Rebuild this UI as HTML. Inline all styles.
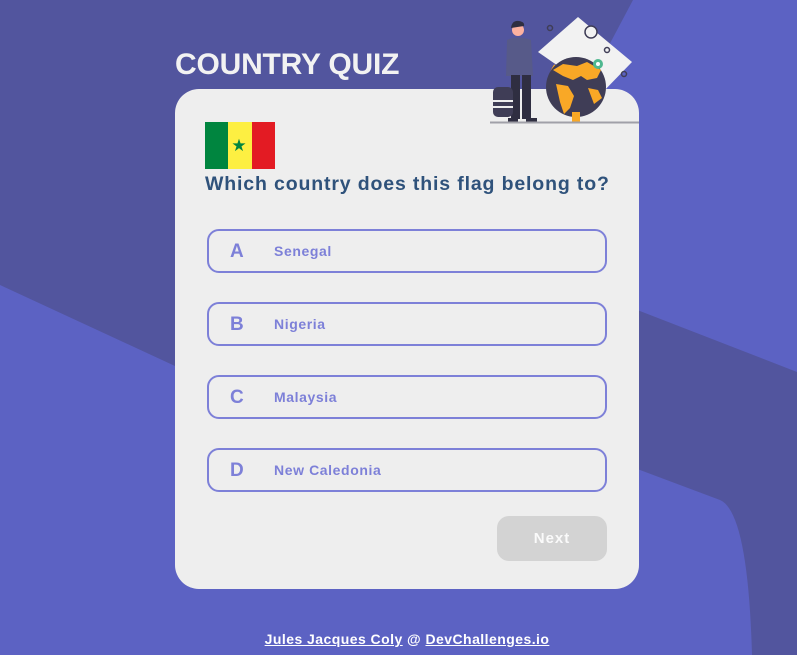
<!DOCTYPE html>
<html><head><meta charset="utf-8"><style>
*{margin:0;padding:0;box-sizing:border-box}
body{width:797px;height:655px;overflow:hidden;background:#5c62c3;font-family:"Liberation Sans",sans-serif;position:relative}
.bg{position:absolute;left:0;top:0}
h1{position:absolute;left:175px;top:48px;font-size:30px;font-weight:bold;color:#f2f2f2;letter-spacing:-0.2px}
.card{position:absolute;left:175px;top:89px;width:464px;height:500px;background:#eeeeee;border-radius:24px}
.flag{position:absolute;left:205px;top:122px;width:70px;height:47px;display:flex}
.flag div{flex:1;position:relative}
.q{position:absolute;left:205px;top:173px;font-size:19.5px;font-weight:bold;color:#2f527b;letter-spacing:0.85px;white-space:nowrap}
.opt{position:absolute;left:207px;width:400px;height:44px;border:2px solid #7d80d8;border-radius:12px;color:#7d80d8;font-weight:bold}
.opt .l{position:absolute;left:21px;top:10px;font-size:19px}
.opt .t{position:absolute;left:65px;top:12px;font-size:14px;letter-spacing:0.6px}
.next{position:absolute;left:497px;top:516px;width:110px;height:45px;background:#d3d3d3;border-radius:12px;color:#fafafa;font-weight:bold;font-size:15px;text-align:center;line-height:45px;letter-spacing:1px}
.foot{position:absolute;left:0;width:814px;top:631px;text-align:center;color:#fff;font-size:14px;font-weight:bold;letter-spacing:0.45px}
.foot u{text-decoration:underline}
</style></head><body>
<svg class="bg" width="797" height="655">
<polygon points="0,0 633,0 580,100 520,220 175,366 0,285" fill="#52559e"/>
<path d="M560,280 L797,372 L797,655 L752,655 Q748,512 720,500 L560,440 Z" fill="#52559e"/>
</svg>
<h1>COUNTRY QUIZ</h1>
<div class="card"></div>
<svg class="bg" width="797" height="655">
<polygon points="578,17 632,62 600,95 538,52" fill="#f2f2f2"/>
<circle cx="591" cy="32" r="6" fill="#f2f2f2" stroke="#3f3d56" stroke-width="1.5"/>
<circle cx="550" cy="28" r="2.5" fill="none" stroke="#3f3d56" stroke-width="1.5"/>
<circle cx="607" cy="50" r="2.5" fill="none" stroke="#3f3d56" stroke-width="1.5"/>
<circle cx="624" cy="74" r="2.5" fill="none" stroke="#3f3d56" stroke-width="1.5"/>
<path d="M555,65 A32,32 0 0 0 578,115" fill="none" stroke="#f9a826" stroke-width="2"/>
<circle cx="576" cy="87" r="30" fill="#3f3d56"/>
<path d="M553,70 l10,-6 l14,2 l10,-4 l14,8 l-4,8 l-10,2 l-6,-4 l-8,4 l-10,-4 z M556,84 l12,2 l6,10 l-4,12 l-6,6 l-4,-12 z M588,88 l10,2 l4,8 l-8,6 z" fill="#f9a826"/>
<rect x="572" y="112" width="8" height="10" fill="#f9a826"/>
<circle cx="598" cy="64" r="5" fill="#4fb890"/><circle cx="598" cy="64" r="2" fill="#fff"/>
<circle cx="518" cy="30" r="6" fill="#fdb1a0"/><path d="M511,28 q1,-8 8,-7 q6,1 5,5 l-13,2z" fill="#2f2e41"/>
<path d="M507,40 q11,-5 24,0 l2,36 l-27,0 z" fill="#575a89"/>
<rect x="511" y="75" width="9" height="44" fill="#2f2e41"/><rect x="522" y="75" width="9" height="44" fill="#2f2e41"/>
<rect x="508" y="118" width="10" height="4" fill="#2f2e41"/><rect x="526" y="118" width="11" height="4" fill="#2f2e41"/>
<rect x="493" y="87" width="20" height="30" rx="5" fill="#3f3d56"/>
<rect x="493" y="100" width="20" height="2" fill="#eee"/><rect x="493" y="106" width="20" height="2" fill="#eee"/>
<line x1="490" y1="122.5" x2="639" y2="122.5" stroke="#a0a0a8" stroke-width="2"/>
</svg>
<div class="flag"><div style="background:#00853f"></div><div style="background:#fdef42"><span style="position:absolute;left:3px;top:14px;color:#00853f;font-size:17px;line-height:20px">★</span></div><div style="background:#e31b23"></div></div>
<div class="q">Which country does this flag belong to?</div>
<div class="opt" style="top:229px"><span class="l">A</span><span class="t">Senegal</span></div>
<div class="opt" style="top:302px"><span class="l">B</span><span class="t">Nigeria</span></div>
<div class="opt" style="top:375px"><span class="l">C</span><span class="t">Malaysia</span></div>
<div class="opt" style="top:448px"><span class="l">D</span><span class="t">New Caledonia</span></div>
<div class="next">Next</div>
<div class="foot"><u>Jules Jacques Coly</u> @ <u>DevChallenges.io</u></div>
</body></html>
